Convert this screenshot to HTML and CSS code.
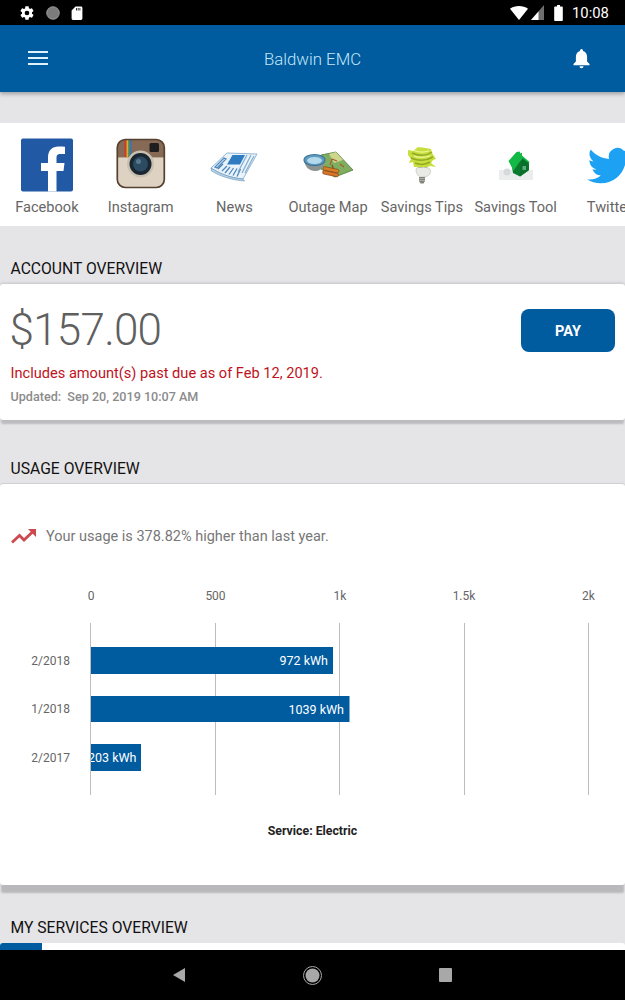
FILE: index.html
```html
<!DOCTYPE html>
<html lang="en">
<head>
<meta charset="utf-8">
<title>Baldwin EMC</title>
<link rel="stylesheet" href="styles.css">
</head>
<body>
<div class="screen">
  <div class="statusbar">
    <div class="status-left">
      <svg width="16" height="16" viewBox="0 0 24 24"><path fill="#fff" d="M19.4 13c.04-.32.1-.66.1-1s-.05-.68-.1-1l2.1-1.65c.2-.15.25-.42.13-.64l-2-3.46c-.12-.22-.39-.3-.61-.22l-2.49 1a7.3 7.3 0 0 0-1.69-.98l-.38-2.65A.49.49 0 0 0 14 2h-4a.49.49 0 0 0-.49.42l-.38 2.65c-.61.25-1.17.59-1.69.98l-2.49-1a.49.49 0 0 0-.61.22l-2 3.46c-.13.22-.07.49.12.64L4.57 11c-.04.32-.07.66-.07 1s.03.68.07 1l-2.11 1.65c-.19.15-.25.42-.12.64l2 3.46c.12.22.39.3.61.22l2.49-1c.52.4 1.08.73 1.69.98l.38 2.65c.03.24.24.42.49.42h4c.25 0 .46-.18.49-.42l.38-2.65c.61-.25 1.17-.59 1.69-.98l2.49 1c.22.08.49 0 .61-.22l2-3.46c.12-.22.07-.49-.13-.64zM12 15.5a3.5 3.5 0 1 1 0-7 3.5 3.5 0 0 1 0 7z"/></svg>
      <svg width="14" height="14" viewBox="0 0 14 14"><circle cx="7" cy="7" r="6.3" fill="#7c7c7c"/><circle cx="7" cy="7" r="6.3" fill="none" stroke="#a8a8a8" stroke-width=".8"/></svg>
      <svg width="12" height="14" viewBox="0 0 12 14"><path fill="#fff" d="M4.5.5H10a1.4 1.4 0 0 1 1.4 1.4v10.7a1.4 1.4 0 0 1-1.4 1.4H2A1.4 1.4 0 0 1 .6 12.600V4.400z"/><path stroke="#000" stroke-width=".8" d="M5.500 2v2.500M7.200 2v2.500M8.900 2v2.500"/></svg>
    </div>
    <div class="status-right">
      <svg class="st-wifi" width="18" height="14" viewBox="0 0 18 14"><path fill="#fff" d="M0 2.800C2.400.9 5.600 0 9 0s6.600.9 9 2.800L9 14z"/></svg>
      <svg class="st-signal" width="13" height="15" viewBox="0 0 13 15"><path fill="#6e6e6e" d="M13 0v15H0z"/><path fill="#fff" d="M7.500 6.500V15H0z"/></svg>
      <svg class="st-batt" width="9" height="16" viewBox="0 0 9 16"><path fill="#fff" d="M3 0h3v1.500h1.800c.6 0 1 .4 1 1V15c0 .6-.4 1-1 1H1.200c-.6 0-1-.4-1-1V2.500c0-.6.400-1 1-1H3z"/></svg>
      <span class="clock">10:08</span>
    </div>
  </div>

  <header class="appbar">
    <svg class="menu" width="20" height="14" viewBox="0 0 20 14"><path fill="#dff2fb" d="M0 0h20v2H0zM0 6h20v2H0zM0 12h20v2H0z"/></svg>
    <div class="app-title">Baldwin EMC</div>
    <svg class="bell" width="17" height="20" viewBox="0 0 16 20"><path fill="#fff" d="M8 0a1.500 1.500 0 0 1 1.500 1.500v.6C12 2.800 13.600 5 13.600 7.800V12.500L16 15v1.200H0V15l2.400-2.500V7.800C2.400 5 4 2.800 6.500 2.100v-.6A1.500 1.500 0 0 1 8 0zM6 17.300h4a2 2 0 0 1-4 0z"/></svg>
  </header>

  <main class="content">
    <nav class="tiles">
      <div class="tile">
        <svg width="64" height="64" viewBox="0 0 64 64"><rect x="6" y="5.500" width="52" height="53" rx="2" fill="#2159a5"/><path fill="#fff" d="M41.500 58.500V38h7l1-8h-8v-5c0-2.400.7-4 4-4h4.500v-7.200c-.8-.1-3.400-.3-6.400-.3-6.300 0-10.600 3.800-10.600 10.900V30H26v8h7v20.500z"/></svg>
        <span>Facebook</span>
      </div>
      <div class="tile">
        <svg width="64" height="64" viewBox="0 0 64 64"><rect x="8.300" y="6.500" width="47" height="48" rx="8" fill="#ded3c2"/><path d="M8.300 14.500a8 8 0 0 1 8-8h31a8 8 0 0 1 8 8V24H8.300z" fill="#866a55"/><path d="M15.500 6.500h2v17.500h-2z" fill="#cf3a30"/><path d="M17.500 6.500h1.800V24h-1.800z" fill="#e3a92f"/><path d="M19.300 6.500h1.500V24h-1.500z" fill="#4a9a60"/><path d="M20.800 6.500h1.700V24h-1.700z" fill="#3c70b2"/><rect x="8.300" y="24" width="47" height="1" fill="#b9a890"/><rect x="40.500" y="10" width="9.500" height="9" rx="1.500" fill="#1e1e20"/><circle cx="31.500" cy="31" r="13.500" fill="#c8c0b0"/><circle cx="31.500" cy="31" r="11" fill="#1a2733"/><circle cx="31.500" cy="31" r="7.500" fill="#2c4a60"/><circle cx="29.500" cy="28.500" r="2.500" fill="#56788e"/><rect x="8.300" y="6.500" width="47" height="48" rx="8" fill="none" stroke="#56402f" stroke-width="1.700"/></svg>
        <span>Instagram</span>
      </div>
      <div class="tile">
        <svg width="64" height="64" viewBox="0 0 64 64"><path d="M9 35L25 20l30 1-14 25c-12-1-23-5-32-11z" fill="#eaf3f9" stroke="#7aa6cb" stroke-width=".8"/><path d="M9 35c9 6 20 10 32 11l1.500 2c-13-1-25-5-33-10z" fill="#b9d3e6" stroke="#5f90bb" stroke-width=".6"/><path d="M30.500 22h12.500l-5 9.500H25z" fill="#2f7cc3"/><path d="M22 25l-9 9 2 1 9-9zM25 33l-5 5M21 31l-5 5M28 34l-5 6M31.500 35l-4.500 6.500M35 35.500l-4 7M38.500 36l-3.500 7.500" stroke="#4f88bd" stroke-width="1.300" fill="none"/><path d="M45 22l-9 17M49 22l-9 18M52 23l-9 17" stroke="#82aed2" stroke-width="1.200" fill="none"/></svg>
        <span>News</span>
      </div>
      <div class="tile">
        <svg width="64" height="64" viewBox="0 0 64 64"><path d="M25 22l15-3 17 18-18 7-14-8z" fill="#7fae5f" stroke="#4f7a3c" stroke-width=".8"/><path d="M33 21l7-2 7 8-9 3z" fill="#cdd68c"/><path d="M34 32l2-6 5 2M44 31l4 3" stroke="#a85a2e" stroke-width="1.100" fill="none"/><path d="M8 27c1 7 5 11 11 11 4 0 7-2 9-5l1-6z" fill="#8b9490"/><ellipse cx="18.500" cy="27" rx="10.500" ry="5.500" fill="#5d9bc2" stroke="#3f7397" stroke-width="1.100"/><ellipse cx="18.500" cy="27.500" rx="7.500" ry="3.500" fill="#b4d9ea"/><path d="M36 32l2 5-3 2" stroke="#7a4b2a" stroke-width="1.200" fill="none"/><rect x="27" y="35" width="16" height="3.500" rx="1.500" fill="#da7f28" stroke="#8b4a16" stroke-width=".7" transform="rotate(12 35 37)"/><rect x="26.500" y="39" width="16" height="3.500" rx="1.500" fill="#d8742a" stroke="#8b4a16" stroke-width=".7" transform="rotate(12 35 41)"/></svg>
        <span>Outage Map</span>
      </div>
      <div class="tile">
        <svg width="64" height="64" viewBox="0 0 64 64"><path d="M18 17l5 1 5-4 8 1 5 1 1 4 4 6-3 1-2 3 5 4-6-1-4 2-3-1-3 3-3-3-3 0-1-5-4 1 2-4-3-4z" fill="#c8de3e"/><path d="M22 20c6 3 15 3 20-1M21 25c7 3 15 3 22-1M25 30c5 2 10 2 15-1" stroke="#8faa24" stroke-width="1.500" fill="none"/><path d="M24 17.500c5 2 10 2 15 .5M24 23c5 2 10 2 16 0" stroke="#eef59a" stroke-width="1.300" fill="none"/><path d="M29 35l2 0 1 3M36 34l-1 4" stroke="#5f7d1e" stroke-width="1.500" fill="none"/><path d="M26 37c0-1.500 1-2.500 2.500-2.500h7c2.500 0 5 1 5 3.500 0 3.500-3 6-6 6h-3c-3 0-5.500-3.500-5.500-7z" fill="#e9e9e6" stroke="#b8b8b2" stroke-width=".6"/><path d="M29 44h6v4l-1.500 2.500h-3L29 48z" fill="#83837d"/><path d="M29 45.500h6M29 47.500h6" stroke="#c8c8c2" stroke-width=".6"/></svg>
        <span>Savings Tips</span>
      </div>
      <div class="tile">
        <svg width="64" height="64" viewBox="0 0 64 64"><rect x="15" y="37" width="34" height="10" fill="#ebeded"/><circle cx="23" cy="39" r="3.500" fill="#d6dada"/><path d="M28 34l10-8 7 3v8l-9 6.500L29 40z" fill="#0a7a2e"/><path d="M32.500 19l3-.5 1 2 1.500-1v3l7.500 6.500-1 1.500-6.500-5-8.500 12-5-9.500z" fill="#12b946"/><path d="M38 25l6.500 5v7.500l-8.500 6 .5-12z" fill="#087029"/><rect x="38.500" y="33" width="3.500" height="4" fill="#5cab7a"/></svg>
        <span>Savings Tool</span>
      </div>
      <div class="tile">
        <svg width="64" height="64" viewBox="0 0 64 64"><path transform="translate(2.800 6) scale(.72)" fill="#1da1f2" d="M71 18.400c-2.200 1-4.600 1.600-7 1.900 2.500-1.500 4.500-3.900 5.400-6.800-2.400 1.400-5 2.400-7.800 3a12.300 12.300 0 0 0-21 11.200C30.400 27.100 21.300 22.200 15.200 14.700a12.300 12.300 0 0 0 3.800 16.400c-2 0-3.900-.6-5.600-1.500v.2c0 6 4.200 11 9.900 12.100-1.800.5-3.700.6-5.600.2 1.600 4.900 6.100 8.500 11.500 8.600A24.700 24.700 0 0 1 10 56c5.500 3.500 12 5.500 19 5.500 22.800 0 35.200-18.900 35.200-35.200v-1.600c2.500-1.800 4.600-4 6.800-6.300z"/></svg>
        <span>Twitter</span>
      </div>
    </nav>

    <section class="section section-account">
      <h2 class="section-title">ACCOUNT OVERVIEW</h2>
      <div class="card account">
        <div class="account-top">
          <div class="amount">$157.00</div>
          <button class="pay">PAY</button>
        </div>
        <p class="pastdue">Includes amount(s) past due as of Feb 12, 2019.</p>
        <p class="updated">Updated:&nbsp; Sep 20, 2019 10:07 AM</p>
      </div>
    </section>

    <section class="section section-usage">
      <h2 class="section-title">USAGE OVERVIEW</h2>
      <div class="card usage">
        <div class="trend">
          <svg width="26" height="16" viewBox="0 0 26 16"><path d="M1 14.500l7.500-7 4.500 4.500 9-8.500" fill="none" stroke="#cc4a4e" stroke-width="2.800"/><path d="M17 1h8v8z" fill="#cc4a4e"/></svg>
          <span>Your usage is 378.82% higher than last year.</span>
        </div>
        <svg class="chart" width="625" height="260" viewBox="0 0 625 260">
          <g class="ticks">
            <text x="91" y="16">0</text><text x="215.500" y="16">500</text><text x="340" y="16">1k</text><text x="464" y="16">1.5k</text><text x="588.500" y="16">2k</text>
          </g>
          <g stroke="#bdbdbd" stroke-width="1">
            <path d="M90.500 39v172M215.500 39v172M339.500 39v172M464.500 39v172M588.500 39v172"/>
          </g>
          <rect x="91" y="63" width="242" height="27" fill="#005b9f"/>
          <rect x="91" y="112" width="258.500" height="26" fill="#005b9f"/>
          <g class="cats">
            <text x="70" y="80.500">2/2018</text><text x="70" y="129">1/2018</text><text x="70" y="177.500">2/2017</text>
          </g>
          <g class="vals">
            <text x="328" y="81">972 kWh</text><text x="344" y="129.500">1039 kWh</text>
            <svg x="91" y="160" width="50" height="27" viewBox="0 0 50 27">
              <rect width="50" height="27" fill="#005b9f"/>
              <text x="45.500" y="18">203 kWh</text>
            </svg>
          </g>
          <text class="service" x="312.500" y="251">Service: Electric</text>
        </svg>
      </div>
    </section>

    <section class="section section-services">
      <h2 class="section-title">MY SERVICES OVERVIEW</h2>
      <div class="card services"><div class="tab"></div></div>
    </section>
  </main>

  <footer class="navbar">
    <svg width="12" height="14" viewBox="0 0 12 14"><path d="M12 0v14L0 7z" fill="#a8a8a8"/></svg>
    <svg width="19" height="19" viewBox="0 0 19 19"><circle cx="9.500" cy="9.500" r="9" fill="none" stroke="#a8a8a8" stroke-width="1"/><circle cx="9.500" cy="9.500" r="7" fill="#a8a8a8"/></svg>
    <svg width="13" height="14" viewBox="0 0 13 14"><rect width="13" height="14" rx="1" fill="#a8a8a8"/></svg>
  </footer>
</div>
</body>
</html>
```

FILE: styles.css
```css
* { box-sizing: border-box; }
html, body { margin: 0; padding: 0; background: #000; }
body { font-family: Roboto, "Liberation Sans", sans-serif; }
.screen { width: 625px; height: 1000px; display: flex; flex-direction: column; overflow: hidden; background: #e5e4e7; }

.statusbar { height: 25px; flex: none; background: #000; display: flex; justify-content: space-between; align-items: center; padding: 0 17px 0 19px; }
.status-left { display: flex; align-items: center; gap: 11px; }
.status-right { display: flex; align-items: center; }
.st-wifi { margin-right: 3px; }
.st-signal { margin-right: 10px; }
.st-batt { margin-right: 9px; }
.clock { color: #fff; font-size: 14.800px; width: 36px; white-space: nowrap; }

.appbar { height: 67px; flex: none; background: #005b9f; display: grid; grid-template-columns: 1fr auto 1fr; align-items: center; padding: 0 28px; box-shadow: 0 2px 4px rgba(0,0,0,.3); position: relative; }
.menu { margin-bottom: 2px; }
.app-title { color: #c2e6f7; font-size: 16.800px; font-weight: 300; }
.bell { justify-self: end; margin-right: 7.500px; }

.content { flex: 1; min-height: 0; display: flex; flex-direction: column; overflow: hidden; padding-top: 31px; }

.tiles { height: 103px; flex: none; background: #fff; display: flex; overflow: hidden; }
.tile { flex: 0 0 93.750px; display: flex; flex-direction: column; align-items: center; padding-top: 10px; }
.tile svg { flex: none; overflow: visible; }
.tile span { color: #666; font-size: 14.600px; line-height: 18px; white-space: nowrap; margin-top: 1px; }

.section-title { margin: 0; padding-left: 10.500px; font-size: 15.700px; line-height: 18px; font-weight: 400; color: #111; }
.section-account { padding-top: 34px; }
.section-usage { padding-top: 40px; }
.section-services { padding-top: 34px; }
.section-title { padding-bottom: 6px; }

.card { background: #fff; border-radius: 3px; }
.account { height: 136px; padding: 25px 10px 0 10.500px; box-shadow: 0 5px 2px -1px #bcbbbe, 0 -1px 3px rgba(0,0,0,.15); }
.account-top { display: flex; justify-content: space-between; align-items: flex-start; }
.amount { font-size: 44px; line-height: 44px; font-weight: 300; color: #5f5f5f; margin: -1px 0 0 -1px; letter-spacing: -.75px; }
.pay { width: 94px; height: 43px; border: 0; border-radius: 8px; padding: 2px 0 0; background: #005b9f; color: #fff; font: 700 14.500px Roboto, sans-serif; }
.pastdue { margin: 12px 0 0; color: #c0121c; font-size: 14.600px; line-height: 18px; }
.updated { margin: 7px 0 0; color: #8b8b8b; font-size: 12.600px; line-height: 16px; font-weight: 500; }

.usage { height: 401px; box-shadow: 0 9px 2px -1px #b9b8bb, 0 -1px 1px rgba(0,0,0,.1); padding-top: 43px; }
.trend { display: flex; align-items: center; padding-left: 11px; gap: 9px; height: 18px; color: #777; font-size: 14.500px; }
.chart { display: block; margin-top: 39px; }
.chart text { font-family: Roboto, "Liberation Sans", sans-serif; }
.ticks text { font-size: 12px; fill: #666; text-anchor: middle; }
.cats text { font-size: 12px; fill: #666; text-anchor: end; }
.vals text { font-size: 12.500px; fill: #fff; text-anchor: end; }
.service { font-size: 12.300px; font-weight: 700; fill: #222; text-anchor: middle; }

.services { height: 20px; overflow: hidden; }
.tab { width: 42px; height: 20px; background: #005b9f; }

.navbar { height: 50px; flex: none; background: #000; display: flex; align-items: center; justify-content: center; gap: 117.500px; position: relative; }
```
